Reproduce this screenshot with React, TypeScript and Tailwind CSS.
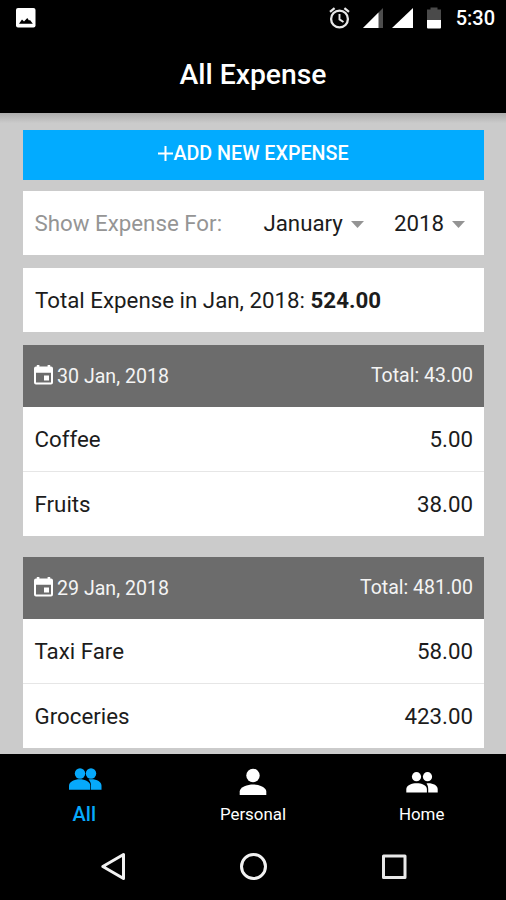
type Expense = { name: string; amount: string };
type Day = { date: string; total: string; items: Expense[] };

const days: Day[] = [
  {
    date: "30 Jan, 2018",
    total: "43.00",
    items: [
      { name: "Coffee", amount: "5.00" },
      { name: "Fruits", amount: "38.00" },
    ],
  },
  {
    date: "29 Jan, 2018",
    total: "481.00",
    items: [
      { name: "Taxi Fare", amount: "58.00" },
      { name: "Groceries", amount: "423.00" },
    ],
  },
];

function StatusBar() {
  return (
    <div className="flex h-9 items-center justify-between pl-4 pr-[11px] text-white">
      <svg width="20" height="20" viewBox="0 0 20 20">
        <rect width="19.5" height="19.5" rx="2" fill="#fff" />
        <path d="M3 15.8 L6 11.6 L8 13.6 L11.3 10 L13 12.5 L14 12 L16.8 15.8 Z" fill="#000" />
      </svg>
      <div className="flex items-center">
        <svg className="mr-[13px]" width="21" height="22" viewBox="0 0 21 22" fill="none" stroke="#e8e8e8">
          <circle cx="10.5" cy="12" r="8.4" strokeWidth="2.3" />
          <path d="M10.5 7v5.4l4 2.6" strokeWidth="1.9" />
          <path d="M1 4.8l4.6-3.7M20 4.8l-4.6-3.7" strokeWidth="2.2" />
        </svg>
        <svg className="mr-[9px]" width="20" height="20" viewBox="0 0 20 20">
          <path d="M0 20L20 0v20z" fill="#4d4d4d" />
          <path d="M0 20L15.5 4.5V20z" fill="#fff" />
        </svg>
        <svg className="mr-[14px]" width="21" height="20" viewBox="0 0 21 20">
          <path d="M0 20L21 0v20z" fill="#fff" />
        </svg>
        <svg className="mr-[15px]" width="14" height="22" viewBox="0 0 14 22">
          <path d="M0 2.5h3.5V0.5h7v2H14V13H0z" fill="#4a4a4a" />
          <path d="M0 13h14v7.5q0 1-1 1H1q-1 0-1-1z" fill="#fff" />
        </svg>
        <span className="text-[20px] font-medium leading-none">5:30</span>
      </div>
    </div>
  );
}

function CalendarIcon() {
  return (
    <svg className="mb-[4px] mr-[4px]" width="19" height="20" viewBox="0 0 19 20" fill="#fff">
      <path
        fillRule="evenodd"
        d="M2.8 0h2.6v1.500h8.2V0h2.600v1.500H17q2 0 2 2v14q0 2-2 2H2q-2 0-2-2v-14q0-2 2-2h.8zM2 7.800v9.700h15V7.800z"
      />
      <rect x="10" y="10.500" width="5" height="5" />
    </svg>
  );
}

function Select({ value }: { value: string }) {
  return (
    <button className="flex items-center">
      {value}
      <svg className="ml-[8px]" width="13" height="7" viewBox="0 0 13 7" fill="#949494">
        <path d="M0 0h13L6.5 7z" />
      </svg>
    </button>
  );
}

function DayCard({ day }: { day: Day }) {
  return (
    <section>
      <div className="flex h-[62px] items-center justify-between bg-[#6c6c6c] px-[11px] pt-[2px] text-[19.6px] text-[#f4f4f4]">
        <span className="flex items-center">
          <CalendarIcon />
          {day.date}
        </span>
        <span className="pb-[2px] text-[19.5px]">Total: {day.total}</span>
      </div>
      <ul className="bg-white">
        {day.items.map((item) => (
          <li
            key={item.name}
            className="flex h-[65px] items-center justify-between border-b border-[#e6e6e6] pl-[11.5px] pr-[11px] pt-px last:h-[64px] last:border-b-0"
          >
            <span>{item.name}</span>
            <span>{item.amount}</span>
          </li>
        ))}
      </ul>
    </section>
  );
}

function TabBar() {
  return (
    <nav className="grid h-[78px] grid-cols-3 text-[16.9px] text-white">
      <div className="flex flex-col items-center text-[#06a9fb]">
        <svg className="ml-[2px] mt-[13px]" width="34" height="24" viewBox="0 0 34 24" fill="currentColor">
          <circle cx="12" cy="6.5" r="5.2" />
          <circle cx="23" cy="6.5" r="5.2" />
          <path d="M1 22.8V18.5c0-3.800 5.500-6.300 10.700-6.300S22.300 14.700 22.300 18.500v4.300z" />
          <path d="M20.5 12.400c7-1 13 1.800 13 6.100v4.300H23V18.500c0-2.600-.8-4.600-2.500-6.100z" />
        </svg>
        <span className="mt-[10px] text-[20px] font-medium leading-[26px]">All</span>
      </div>
      <div className="flex flex-col items-center">
        <svg className="mt-[13px]" width="28" height="28" viewBox="0 0 28 28" fill="currentColor">
          <circle cx="14" cy="8.5" r="6.7" />
          <path d="M.7 28v-3.5C.7 20 9 17.5 14 17.5S27.3 20 27.3 24.5V28z" />
        </svg>
        <span className="mt-[6px] leading-[26px]">Personal</span>
      </div>
      <div className="flex flex-col items-center">
        <svg className="mt-[17px]" width="32" height="22" viewBox="0 0 32 22" fill="currentColor">
          <circle cx="10.5" cy="5.7" r="4.6" />
          <circle cx="21.5" cy="5.7" r="4.6" />
          <path d="M.3 21.500v-3.500C.3 14.200 6 12.200 10.700 12.200S20.900 14.200 20.900 18v3.500z" />
          <path d="M20.500 12.400c6-.6 11.200 1.900 11.200 5.600v3.500h-9.500V18c0-2.300-.5-4.200-1.700-5.600z" />
        </svg>
        <span className="mt-[8px] leading-[26px]">Home</span>
      </div>
    </nav>
  );
}

function SystemNav() {
  return (
    <div className="flex flex-1 items-center justify-between pl-[100px] pr-[99px]">
      <svg width="27" height="30" viewBox="0 0 27 30" fill="none" stroke="#f2f2f2" strokeWidth="3" strokeLinejoin="round">
        <path d="M2.8 15.500L23.500 3.500v24z" />
      </svg>
      <svg width="28" height="28" viewBox="0 0 28 28" fill="none" stroke="#f2f2f2" strokeWidth="3">
        <circle cx="13.5" cy="14.5" r="12" />
      </svg>
      <svg width="26" height="26" viewBox="0 0 26 26" fill="none" stroke="#e8e8e8" strokeWidth="3" strokeLinejoin="round">
        <rect x="2.5" y="3" width="21.5" height="21.5" />
      </svg>
    </div>
  );
}

export default function App() {
  return (
    <div className="flex h-[900px] w-[506px] flex-col overflow-hidden bg-black font-['Roboto',sans-serif]">
      <header className="h-[113px] shrink-0">
        <StatusBar />
        <h1 className="pt-[22px] text-center text-[28.3px] font-medium leading-[34px] text-white">All Expense</h1>
      </header>

      <main className="h-[641px] shrink-0 overflow-hidden bg-[#cbcbcb] text-[22.3px] text-[#1c1c1c]">
        <div className="h-[17px] bg-linear-to-b from-[#acacac] to-[#cbcbcb] to-60%" />
        <div className="ml-[23px] w-[461px]">
          <button className="flex h-[50px] w-full items-center justify-center bg-[#02abff] pb-[2px] text-[19.7px] font-medium text-white">
            <svg className="mb-px" width="15" height="15" viewBox="0 0 15 15" fill="none" stroke="#fff" strokeWidth="2">
              <path d="M7.5 0v15M0 7.5h15" />
            </svg>
            ADD NEW EXPENSE
          </button>
          <div className="mt-[11px] flex h-[64px] items-center bg-white pl-[11.5px] pr-[19px] pt-[2px]">
            <span className="mr-auto text-[#959595]">Show Expense For:</span>
            <div className="flex gap-[30px]">
              <Select value="January" />
              <Select value="2018" />
            </div>
          </div>
          <div className="mt-[13px] flex h-[64px] items-center bg-white pl-[12px] pt-[2px]">
            <p>
              Total Expense in Jan, 2018: <b className="font-bold">524.00</b>
            </p>
          </div>
          <div className="mt-[13px] flex flex-col gap-[21px]">
            {days.map((day) => (
              <DayCard key={day.date} day={day} />
            ))}
          </div>
        </div>
      </main>

      <TabBar />
      <SystemNav />
    </div>
  );
}
